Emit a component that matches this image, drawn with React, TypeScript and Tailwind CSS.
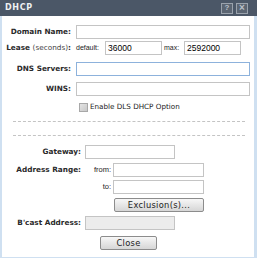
const dv = { fontFamily: '"DejaVu Sans", Verdana, sans-serif' };
const ar = { fontFamily: '"Liberation Sans", Arial, sans-serif' };

function Label({ children, w }: { children: React.ReactNode; w: string }) {
  return (
    <div className={`${w} shrink-0 text-right text-[7.3px] font-bold text-[#2a2a2a] whitespace-nowrap`} style={dv}>
      {children}
    </div>
  );
}

function Field({ w, focus, disabled, value }: { w: string; focus?: boolean; disabled?: boolean; value?: string }) {
  return (
    <div
      className={`${w} h-[14px] border ${focus ? 'border-[#8db2dc]' : 'border-[#c4c4c4]'} ${disabled ? 'bg-[#ececec]' : 'bg-white'} flex items-center px-[2px] text-[8.5px] text-black`}
      style={ar}
    >
      {value}
    </div>
  );
}

function Btn({ children, w }: { children: React.ReactNode; w: string }) {
  return (
    <div
      className={`${w} h-[14px] border border-[#8c8c8c] rounded-[2px] bg-gradient-to-b from-[#f7f7f7] to-[#d6d6d6] flex items-center justify-center text-[8.3px] tracking-[0.3px] text-[#222]`}
      style={dv}
    >
      {children}
    </div>
  );
}

export default function App() {
  return (
    <div className="w-[258px] h-[260px] bg-white">
      <div className="w-[257px] h-[258px] flex flex-col border-l-2 border-r-[3px] border-b border-[#cfe0f1]">
        <div className="h-[16px] -ml-[2px] -mr-[3px] bg-[#4b5767] flex items-center pl-[5px] pr-[9px]">
          <span className="text-[8px] font-bold tracking-[0.7px] text-[#eef0f2]" style={dv}>DHCP</span>
          <div className="ml-auto flex gap-[3px]">
            <div className="w-[12px] h-[11px] border border-[#9aa2ac] bg-[#5b6572] flex items-center justify-center text-[8px] font-bold text-[#b9c0c8] leading-none" style={ar}>?</div>
            <div className="w-[12px] h-[11px] border border-[#9aa2ac] bg-[#5b6572] flex items-center justify-center text-[10px] font-bold text-[#b9c0c8] leading-none" style={ar}>×</div>
          </div>
        </div>

        <div className="flex flex-col pt-[9px]">
          <div className="flex items-center">
            <Label w="w-[69px]">Domain Name:</Label>
            <div className="w-[5px]" />
            <Field w="w-[174px]" />
          </div>

          <div className="flex items-center mt-[2px]">
            <Label w="w-[69px]">
              Lease <span className="font-normal text-[#444]">(seconds)</span>:
            </Label>
            <span className="ml-[5px] w-[29px] text-[7px] text-[#222]" style={ar}>default:</span>
            <Field w="w-[57px]" value="36000" />
            <span className="ml-[2px] w-[20px] text-[7px] text-[#222]" style={ar}>max:</span>
            <Field w="w-[57px]" value="2592000" />
          </div>

          <div className="flex items-center mt-[7px]">
            <Label w="w-[69px]">DNS Servers:</Label>
            <div className="w-[5px]" />
            <Field w="w-[174px]" focus />
          </div>

          <div className="flex items-center mt-[6px]">
            <Label w="w-[69px]">WINS:</Label>
            <div className="w-[5px]" />
            <Field w="w-[174px]" />
          </div>

          <div className="flex items-center mt-[7px] pl-[77px] h-[9px]">
            <div className="w-[9px] h-[9px] border border-[#a8a8a8] bg-gradient-to-br from-[#e4e4e4] to-[#c8c8c8]" />
            <span className="ml-[2px] text-[7.2px] text-[#222]" style={dv}>Enable DLS DHCP Option</span>
          </div>

          <div className="mt-[9px] ml-[11px] w-[232px] border-t border-dashed border-[#c4c4c4]" />
          <div className="mt-[13px] ml-[11px] w-[232px] border-t border-dashed border-[#c4c4c4]" />

          <div className="flex items-center mt-[9px]">
            <Label w="w-[79px]">Gateway:</Label>
            <div className="w-[4px]" />
            <Field w="w-[90px]" />
          </div>

          <div className="flex items-center mt-[4px]">
            <Label w="w-[79px]">Address Range:</Label>
            <span className="w-[32px] pr-[2px] text-right text-[7.5px] text-[#222]" style={ar}>from:</span>
            <Field w="w-[91px]" />
          </div>

          <div className="flex items-center mt-[3px]">
            <span className="w-[111px] pr-[2px] text-right text-[7.5px] text-[#222]" style={ar}>to:</span>
            <Field w="w-[91px]" />
          </div>

          <div className="flex mt-[4px] pl-[112px]">
            <Btn w="w-[90px]">Exclusion(s)...</Btn>
          </div>

          <div className="flex items-center mt-[4px]">
            <Label w="w-[79px]">B'cast Address:</Label>
            <div className="w-[4px]" />
            <Field w="w-[90px]" disabled />
          </div>

          <div className="flex mt-[6px] pl-[98px]">
            <Btn w="w-[57px]">Close</Btn>
          </div>
        </div>
      </div>
    </div>
  );
}
